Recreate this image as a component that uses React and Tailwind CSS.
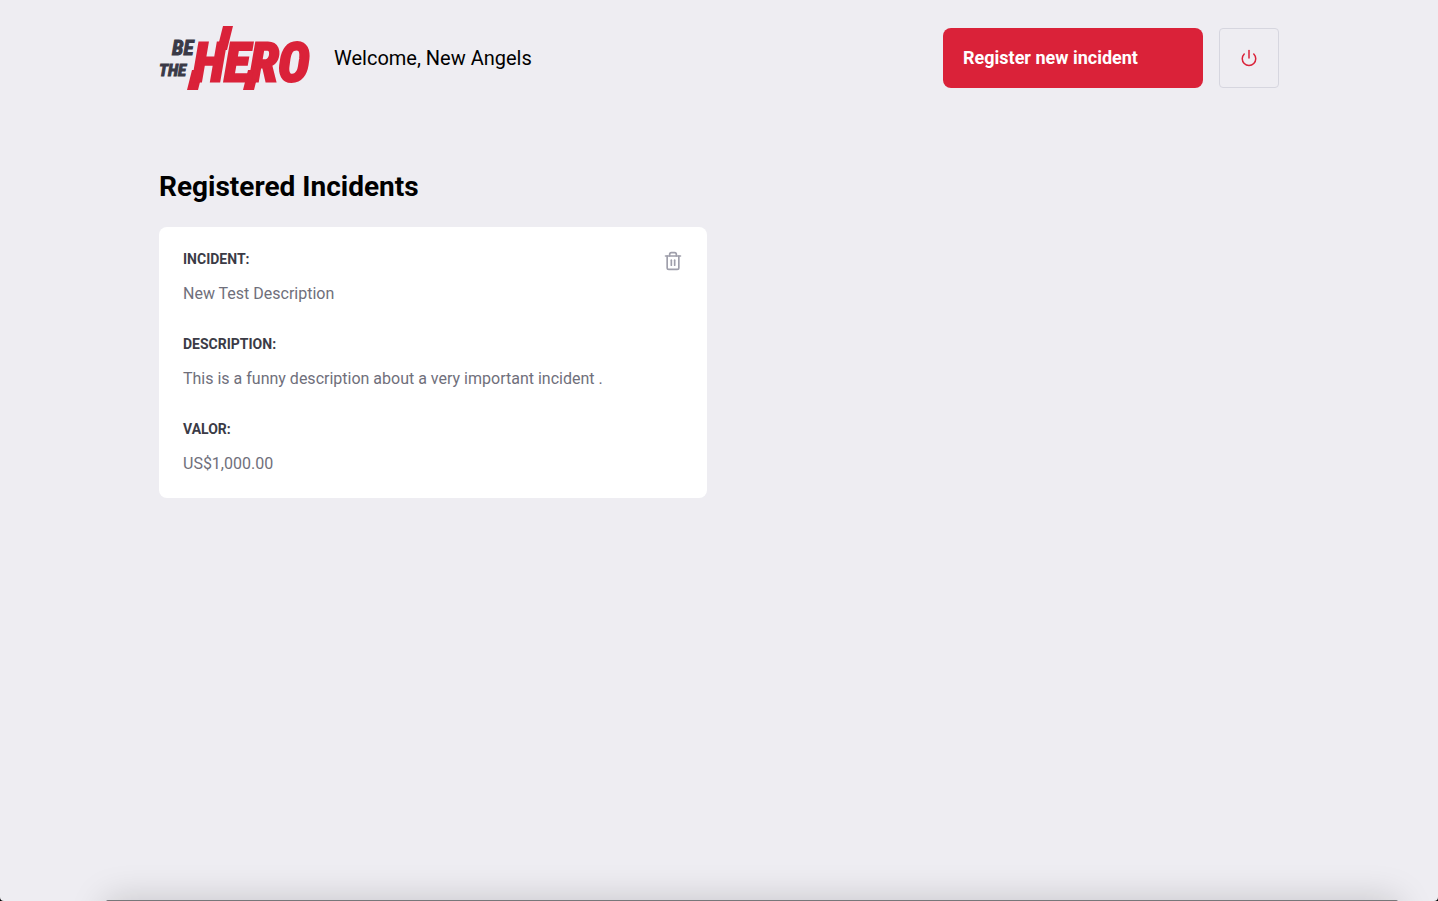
import { FiPower, FiTrash2 } from "react-icons/fi";

function Logo() {
  return (
    <svg
      viewBox="0 0 151 64"
      role="img"
      aria-label="Be The Hero"
      className="h-16 w-[151px] shrink-0 overflow-visible font-['Liberation_Sans_Narrow','Roboto_Condensed','Liberation_Sans',sans-serif] font-bold italic"
    >
      <g fill="#3a3a47" stroke="#3a3a47" strokeWidth="1">
        <text x="13" y="29" fontSize="21">BE</text>
        <text x="0" y="50" fontSize="17">THE</text>
      </g>
      <g fill="#da2239">
        <path d="M64 0H74L68 24H58Z" />
        <path d="M33 44H44L39 64H28Z" />
        <path d="M89 44H100L95 64H84Z" />
        <text x="34" y="55" fontSize="53" stroke="#da2239" strokeWidth="3">
          HERO
        </text>
      </g>
    </svg>
  );
}

const details = [
  { label: "INCIDENT:", value: "New Test Description" },
  {
    label: "DESCRIPTION:",
    value: "This is a funny description about a very important incident .",
  },
  { label: "VALOR:", value: "US$1,000.00" },
];

export default function App() {
  return (
    <div className="bg-black">
      <div className="relative min-h-screen overflow-hidden rounded-b-[4px] bg-[#eeedf2] font-[Roboto,sans-serif] text-black antialiased">
        <div className="mx-auto max-w-[1180px] px-[30px] pt-[26px] pb-12">
          <header className="flex flex-wrap items-center gap-y-4">
            <Logo />
            <span className="ml-6 text-xl">Welcome, New Angels</span>
            <div className="ml-auto flex items-center gap-4">
              <a
                href="#new"
                className="flex h-[60px] w-[260px] items-center rounded-lg bg-[#da2239] px-5 text-lg font-bold text-white"
              >
                Register new incident
              </a>
              <button
                type="button"
                aria-label="Log out"
                className="flex size-[60px] items-center justify-center rounded border border-[#d6d6df] text-[#da2239]"
              >
                <FiPower size={18} />
              </button>
            </div>
          </header>

          <main>
            <h1 className="mt-20 mb-6 text-[28px] leading-[33px] font-bold">
              Registered Incidents
            </h1>
            <ul className="grid grid-cols-1 gap-6 md:grid-cols-2">
              <li className="flex items-start justify-between rounded-lg bg-white p-6">
                <dl className="flex flex-col gap-8">
                  {details.map((item) => (
                    <div key={item.label} className="flex flex-col gap-4">
                      <dt className="text-sm leading-4 font-bold text-[#3b3b46]">
                        {item.label}
                      </dt>
                      <dd className="text-base leading-[21px] text-[#6f6f7b]">
                        {item.value}
                      </dd>
                    </div>
                  ))}
                </dl>
                <button
                  type="button"
                  aria-label="Delete incident"
                  className="shrink-0 text-[#9f9fab]"
                >
                  <FiTrash2 size={20} />
                </button>
              </li>
            </ul>
          </main>
        </div>
        <div className="absolute right-10 -bottom-[99px] left-[106px] h-[100px] rounded-t-[2px] bg-[#77777a] shadow-[0_0_36px_rgba(0,0,0,0.18)]" />
      </div>
    </div>
  );
}
